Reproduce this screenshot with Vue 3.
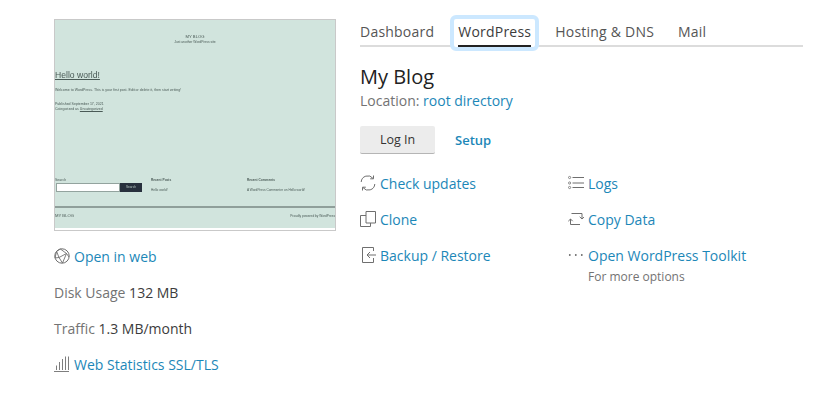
<script setup>
// Site card: thumbnail and stats on the left, tabs and actions on the right.
const tabs = [
  { label: 'Dashboard' },
  { label: 'WordPress', active: true },
  { label: 'Hosting & DNS' },
  { label: 'Mail' },
];
</script>

<template>
  <div class="page">
    <aside class="side">
      <div class="thumb">
        <div class="shot">
          <div class="shot-head">
            <div class="shot-title">MY BLOG</div>
            <div class="shot-tag">Just another WordPress site</div>
          </div>
          <div class="shot-post">
            <div class="shot-h1">Hello world!</div>
            <div class="shot-p">Welcome to WordPress. This is your first post. Edit or delete it, then start writing!</div>
            <div class="shot-meta">Published September 17, 2021</div>
            <div class="shot-meta">Categorized as <u>Uncategorized</u></div>
          </div>
          <div class="shot-widgets">
            <div class="shot-search">
              <div class="shot-meta">Search</div>
              <div class="shot-form">
                <span class="shot-input"></span>
                <span class="shot-btn">Search</span>
              </div>
            </div>
            <div class="shot-col posts">
              <b>Recent Posts</b>
              <span>Hello world!</span>
            </div>
            <div class="shot-col">
              <b>Recent Comments</b>
              <span>A WordPress Commenter on Hello world!</span>
            </div>
          </div>
          <div class="shot-foot">
            <span class="shot-foot-name">MY BLOG</span>
            <span class="shot-foot-by">Proudly powered by WordPress</span>
          </div>
        </div>
      </div>

      <ul class="stats">
        <li>
          <svg class="icon" width="16" height="16" viewBox="0 0 16 16" fill="none" stroke="#6f6f6f">
            <circle cx="8" cy="8" r="7.2" />
            <path d="M2.6 3.4 6.4 1M2.6 3.4 5 9.5M2.6 3.4 1 10M5 9.5 12.5 5.5M5 9.5 8.5 15M5 9.5 1 10M6.4 1 12.5 5.5M12.5 5.5 15 9M12.5 5.5 8.5 15" stroke-width=".9" />
          </svg>
          <a>Open in web</a>
        </li>
        <li><span class="muted">Disk Usage</span>&nbsp;132 MB</li>
        <li><span class="muted">Traffic</span>&nbsp;1.3 MB/month</li>
        <li>
          <svg class="icon" width="16" height="16" viewBox="0 0 16 16" fill="none" stroke="#6f6f6f">
            <path d="M0 15.5h15M2.5 14V9.5M5.5 14V6M8.5 14V3M11.5 14V.5M14.5 14V.5" stroke-width=".9" />
          </svg>
          <a>Web Statistics SSL/TLS</a>
        </li>
      </ul>
    </aside>

    <main class="content">
      <nav class="tabs">
        <span v-for="tab in tabs" :key="tab.label" class="tab" :class="{ active: tab.active }">{{ tab.label }}</span>
      </nav>

      <h1 class="title">My Blog</h1>
      <div class="location"><span class="muted">Location:</span> <a>root directory</a></div>

      <div class="buttons">
        <button class="login">Log In</button>
        <a class="setup">Setup</a>
      </div>

      <div class="actions">
        <div class="action">
          <svg class="icon" width="16" height="16" viewBox="0 0 16 16" fill="none" stroke="#6f6f6f">
            <path d="M1.2 7A6.6 6.6 0 0 1 13 3.4M14.8 9A6.6 6.6 0 0 1 3 12.6" />
            <path d="M13.5.5v3.3h-3.3M2.5 15.5v-3.3h3.3" />
          </svg>
          <a>Check updates</a>
        </div>
        <div class="action">
          <svg class="icon" width="16" height="16" viewBox="0 0 16 16" fill="none" stroke="#6f6f6f">
            <circle cx="1.6" cy="2.5" r="1.1" stroke-width=".8" />
            <circle cx="1.6" cy="8" r="1.1" stroke-width=".8" />
            <circle cx="1.6" cy="12.5" r="1.1" stroke-width=".8" />
            <path d="M4.5 2.5H16M4.5 8H16M4.5 12.5H16" />
          </svg>
          <a>Logs</a>
        </div>
        <div class="action">
          <svg class="icon" width="16" height="16" viewBox="0 0 16 16" fill="none" stroke="#6f6f6f">
            <path d="M6 .5h9.5V12H6z" />
            <path d="M6 4.5H.5v11h10V12" />
          </svg>
          <a>Clone</a>
        </div>
        <div class="action">
          <svg class="icon" width="16" height="16" viewBox="0 0 16 16" fill="none" stroke="#6f6f6f">
            <path d="M3.5 2.5h10.5v5.5M12 13.5H2.5V8" />
            <path d="M11.7 5.8 14 8l2.3-2.2M.3 10.2 2.5 8l2.2 2.2" />
          </svg>
          <a>Copy Data</a>
        </div>
        <div class="action">
          <svg class="icon" width="16" height="16" viewBox="0 0 16 16" fill="none" stroke="#6f6f6f">
            <path d="M13.5 4V.5h-11v15h11V11" />
            <path d="M16 8H7M10 5 7 8l3 3" />
          </svg>
          <a>Backup / Restore</a>
        </div>
        <div class="action toolkit">
          <svg class="icon" width="16" height="16" viewBox="0 0 16 16" fill="#666">
            <circle cx="1.8" cy="8" r=".9" />
            <circle cx="7.8" cy="8" r=".9" />
            <circle cx="13.8" cy="8" r=".9" />
          </svg>
          <a>Open WordPress Toolkit</a>
          <small>For more options</small>
        </div>
      </div>
    </main>
  </div>
</template>

<style>
html,
body {
  background: #fff;
}
</style>

<style scoped>
.page {
  display: flex;
  gap: 24px;
  width: 818px;
  height: 401px;
  padding: 19px 15px 0 54px;
  box-sizing: border-box;
  overflow: hidden;
  font-family: "Open Sans", sans-serif;
  font-size: 14px;
  color: #3c3c3c;
}

a {
  color: #1c87b8;
}

.muted {
  color: #737373;
}

.icon {
  flex: none;
  display: block;
  width: 16px;
  height: 16px;
}

.side {
  flex: none;
  width: 282px;
}

.thumb {
  height: 212px;
  box-sizing: border-box;
  border: 1px solid #c9c9c9;
  padding-bottom: 2px;
  overflow: hidden;
}

.shot {
  height: 100%;
  display: flex;
  flex-direction: column;
  background: #d1e4dd;
  font-family: "Liberation Sans", sans-serif;
  font-size: 3.55px;
  line-height: 5px;
  color: #4a5a56;
  filter: blur(0.45px);
}

.shot-head {
  height: 44px;
  padding-top: 14px;
  box-sizing: border-box;
  text-align: center;
}

.shot-title {
  font-size: 4.2px;
}

.shot-tag {
  font-size: 3.3px;
  margin-top: 0.5px;
}

.shot-post {
  height: 114px;
  padding-top: 5px;
  box-sizing: border-box;
}

.shot-h1 {
  font-size: 8.6px;
  line-height: 12px;
  text-decoration: underline;
  text-decoration-thickness: 0.6px;
}

.shot-p {
  margin: 6.5px 0 9.5px;
}

.shot-widgets {
  display: flex;
  height: 28px;
}

.shot-search {
  width: 96px;
}

.shot-form {
  display: flex;
  height: 9px;
  margin-left: 1px;
}

.shot-input {
  width: 64px;
  background: #fff;
  border: 1px solid #93a39e;
  box-sizing: border-box;
}

.shot-btn {
  width: 22px;
  background: #28303d;
  color: #b8c8c3;
  font-size: 3.2px;
  line-height: 9px;
  text-align: center;
}

.shot-col {
  display: flex;
  flex-direction: column;
  gap: 5px;
  font-size: 3.2px;
}

.posts {
  width: 96px;
}

.shot-foot {
  display: flex;
  justify-content: space-between;
  border-top: 2px solid #8f9f9a;
  padding-top: 5px;
  line-height: 6px;
}

.shot-foot-name {
  font-size: 4.2px;
}

.shot-foot-by {
  font-size: 3.2px;
}

.stats {
  list-style: none;
  margin: 7px 0 0;
  padding: 0;
}

.stats li {
  display: flex;
  align-items: center;
  gap: 4px;
  height: 36px;
}

.stats li > .muted {
  margin-right: -4px;
}

.content {
  flex: 1;
  min-width: 0;
}

.tabs {
  display: flex;
  gap: 24px;
  height: 28px;
  box-sizing: border-box;
  border-bottom: 2px solid #dcdcdc;
  font-weight: 500;
  letter-spacing: 0.22px;
  color: #555;
}

.tab {
  position: relative;
  height: 28px;
  box-sizing: border-box;
  padding-top: 3px;
  line-height: 20px;
}

.tab.active {
  color: #3c3c3c;
  border-bottom: 2px solid #222;
  box-shadow: 0 0 0 4px #fff;
}

/* focus ring round the active tab */
.tab.active::after {
  content: "";
  position: absolute;
  inset: -4px -8px -6px;
  border: 4px solid #cce8ff;
  border-radius: 6px;
}

.title {
  margin: 16px 0 0;
  font-size: 20px;
  font-weight: 400;
  line-height: 28px;
  color: #222;
}

.location {
  line-height: 20px;
}

.buttons {
  display: flex;
  align-items: center;
  gap: 20px;
  margin-top: 15px;
}

.login {
  width: 75px;
  height: 28px;
  padding: 0;
  border: 0;
  border-bottom: 1px solid #b5b5b5;
  border-radius: 2px;
  background: #ececec;
  font: inherit;
  font-size: 12.5px;
  color: #333;
}

.setup {
  font-size: 13px;
  font-weight: 600;
}

.actions {
  display: grid;
  grid-template-columns: 208px 1fr;
  grid-auto-rows: 36px;
  margin-top: 11px;
}

.action {
  display: flex;
  align-items: center;
  gap: 4px;
  height: 36px;
}

.toolkit {
  position: relative;
}

.toolkit small {
  position: absolute;
  left: 20px;
  top: 32px;
  font-size: 12px;
  line-height: 16px;
  color: #737373;
}
</style>
